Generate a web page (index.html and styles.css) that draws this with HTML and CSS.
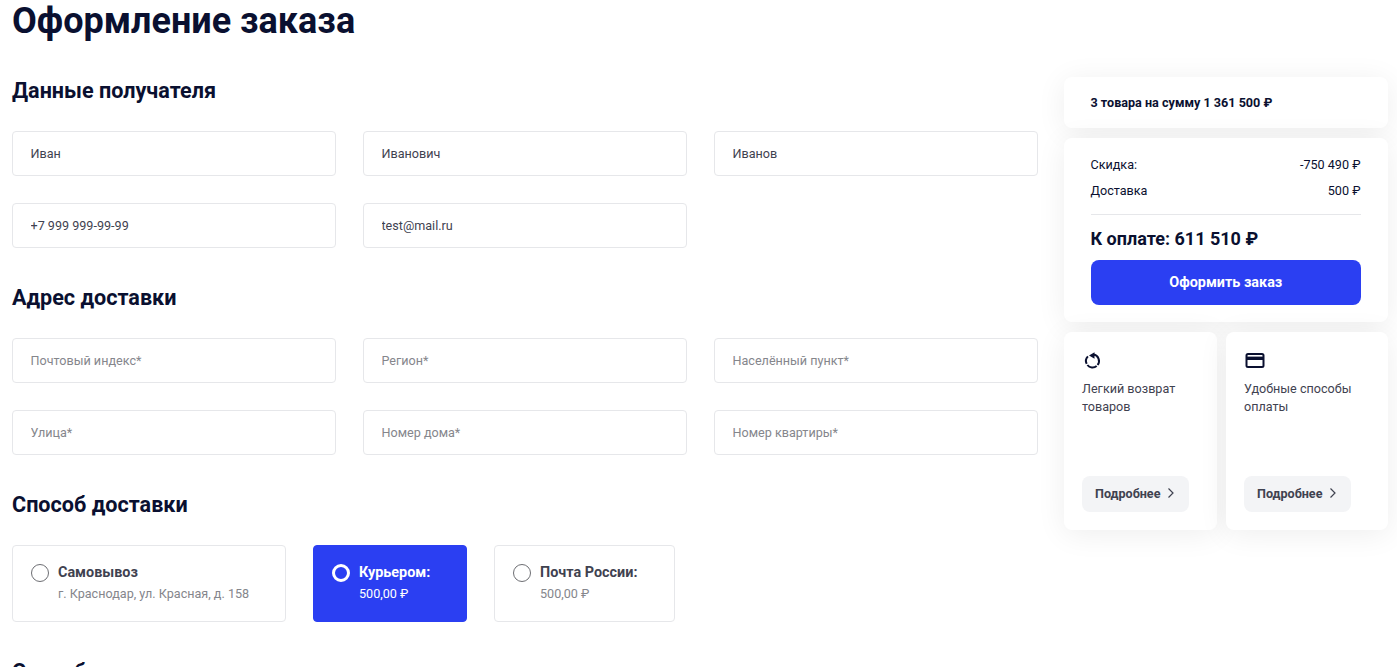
FILE: index.html
```html
<!DOCTYPE html>
<html lang="ru">
<head>
<meta charset="utf-8">
<title>Оформление заказа</title>
<link rel="stylesheet" href="styles.css">
</head>
<body>
<div class="page">
  <main class="main">
    <h1 class="title">Оформление заказа</h1>
    <section class="section section-first">
      <h2 class="heading">Данные получателя</h2>
      <div class="fields">
        <input class="field" value="Иван">
        <input class="field" value="Иванович">
        <input class="field" value="Иванов">
        <input class="field" value="+7 999 999-99-99">
        <input class="field" value="test@mail.ru">
      </div>
    </section>
    <section class="section">
      <h2 class="heading">Адрес доставки</h2>
      <div class="fields">
        <input class="field" placeholder="Почтовый индекс*">
        <input class="field" placeholder="Регион*">
        <input class="field" placeholder="Населённый пункт*">
        <input class="field" placeholder="Улица*">
        <input class="field" placeholder="Номер дома*">
        <input class="field" placeholder="Номер квартиры*">
      </div>
    </section>
    <section class="section">
      <h2 class="heading">Способ доставки</h2>
      <div class="options">
        <div class="option option-pickup">
          <span class="radio"></span>
          <div><div class="option-name">Самовывоз</div><div class="option-note">г. Краснодар, ул. Красная, д. 158</div></div>
        </div>
        <div class="option option-courier option-active">
          <span class="radio"></span>
          <div><div class="option-name">Курьером:</div><div class="option-note">500,00 ₽</div></div>
        </div>
        <div class="option option-post">
          <span class="radio"></span>
          <div><div class="option-name">Почта России:</div><div class="option-note">500,00 ₽</div></div>
        </div>
      </div>
    </section>
    <section class="section">
      <h2 class="heading">Способ оплаты</h2>
    </section>
  </main>
  <aside class="side">
    <div class="card card-count">3 товара на сумму 1 361 500 ₽</div>
    <div class="card card-total">
      <div class="line"><span>Скидка:</span><span>-750 490 ₽</span></div>
      <div class="line"><span>Доставка</span><span>500 ₽</span></div>
      <div class="rule"></div>
      <div class="pay">К оплате: 611 510 ₽</div>
      <button class="submit">Оформить заказ</button>
    </div>
    <div class="perks">
      <div class="card perk">
        <svg class="perk-icon" width="24" height="24" viewBox="0 0 24 24"><path fill="none" stroke="#0a1030" stroke-width="2" d="M11.5 5.58A6.5 6.5 0 0 1 15.62 16M14.68 16.98A6.5 6.5 0 0 1 5.38 16M4.66 14.85A6.5 6.5 0 0 1 5.9 7.4"/><path fill="#0a1030" d="M7 6.5 12.5 3.2v6.6z"/></svg>
        <p class="perk-text">Легкий возврат товаров</p>
        <button class="more">Подробнее<svg width="8" height="12" viewBox="0 0 8 12"><path d="M1.5 1.5 6 6l-4.5 4.5" fill="none" stroke="#3f4250" stroke-width="1.2"/></svg></button>
      </div>
      <div class="card perk">
        <svg class="perk-icon" width="24" height="24" viewBox="0 0 24 24"><rect x="2.5" y="5" width="17" height="13" rx="1.5" fill="none" stroke="#0a1030" stroke-width="2"/><rect x="2.5" y="7.6" width="17" height="3.4" fill="#0a1030"/></svg>
        <p class="perk-text">Удобные способы оплаты</p>
        <button class="more">Подробнее<svg width="8" height="12" viewBox="0 0 8 12"><path d="M1.5 1.5 6 6l-4.5 4.5" fill="none" stroke="#3f4250" stroke-width="1.2"/></svg></button>
      </div>
    </div>
  </aside>
</div>
</body>
</html>
```
FILE: styles.css
```css
* { box-sizing: border-box; }
html, body { margin: 0; height: 667px; overflow: hidden; background: #fff; }
body { font-family: Roboto, "Liberation Sans", sans-serif; color: #0a1030; }
.page { display: flex; gap: 26px; padding: 0 9px 0 12px; height: 667px; overflow: hidden; }
.main { width: 1026px; flex: none; }
.title { margin: 0; font-size: 36px; line-height: 42px; font-weight: 700; }
.section { margin-top: 37px; }
.section-first { margin-top: 36px; }
.heading { margin: 0; font-size: 21.6px; line-height: 26px; font-weight: 700; }
.fields { display: grid; grid-template-columns: repeat(3, 324px); gap: 27px; margin-top: 27px; }
.field { height: 45px; width: 100%; padding: 0 17.5px; border: 1px solid #e6e7ea; border-radius: 4px; font: 400 12.6px Roboto, sans-serif; color: #3f4250; outline: none; background: #fff; }
.field::placeholder { color: #85868c; opacity: 1; }
.options { display: flex; gap: 27px; margin-top: 27px; }
.option { height: 77px; display: flex; gap: 9px; padding: 18px 18px 0; border: 1px solid #e6e7ea; border-radius: 4px; }
.option-pickup { width: 274px; }
.option-courier { width: 154px; }
.option-post { width: 181px; }
.option-active { background: #2b3ff2; border-color: #2b3ff2; color: #fff; }
.radio { width: 18px; height: 18px; border: 1px solid #6d6e73; border-radius: 50%; flex: none; }
.option-active .radio { border: 3px solid #fff; }
.option-name { font-size: 14.4px; line-height: 18px; font-weight: 700; color: #3f4250; }
.option-note { margin-top: 3px; font-size: 12.6px; line-height: 18px; color: #85868c; }
.option-active .option-name, .option-active .option-note { color: #fff; }
.side { width: 324px; flex: none; padding-top: 77px; display: flex; flex-direction: column; gap: 10px; }
.card { background: #fff; border-radius: 8px; box-shadow: 0 4px 30px rgba(0, 0, 0, 0.07); }
.card-count { height: 51px; padding: 0 26.5px; display: flex; align-items: center; font-size: 12.6px; font-weight: 700; }
.card-total { height: 184px; padding: 18px 27px 0 26.5px; }
.line { display: flex; justify-content: space-between; padding-right: 0.5px; font-size: 12.6px; line-height: 18px; margin-bottom: 8px; }
.rule { height: 1px; background: #e6e7ea; margin-top: 14px; }
.pay { margin-top: 13px; font-size: 18px; line-height: 22px; font-weight: 700; }
.submit { display: block; width: 100%; height: 45px; margin-top: 10px; border: 0; border-radius: 8px; background: #2b3ff2; color: #fff; font: 700 14.4px Roboto, sans-serif; }
.perks { display: grid; grid-template-columns: 153px 162px; gap: 9px; }
.perk { height: 198px; padding: 17px 18px 0 18px; position: relative; }
.perk-icon { display: block; }
.perk-text { margin: 7px 0 0; font-size: 12.6px; line-height: 18px; color: #3f4250; }
.more { position: absolute; left: 18px; bottom: 18px; height: 36px; padding: 0 14px 2px 13px; display: flex; align-items: center; gap: 6.5px; border: 0; border-radius: 8px; background: #f3f4f6; color: #3f4250; font: 700 12.6px Roboto, sans-serif; }
```
